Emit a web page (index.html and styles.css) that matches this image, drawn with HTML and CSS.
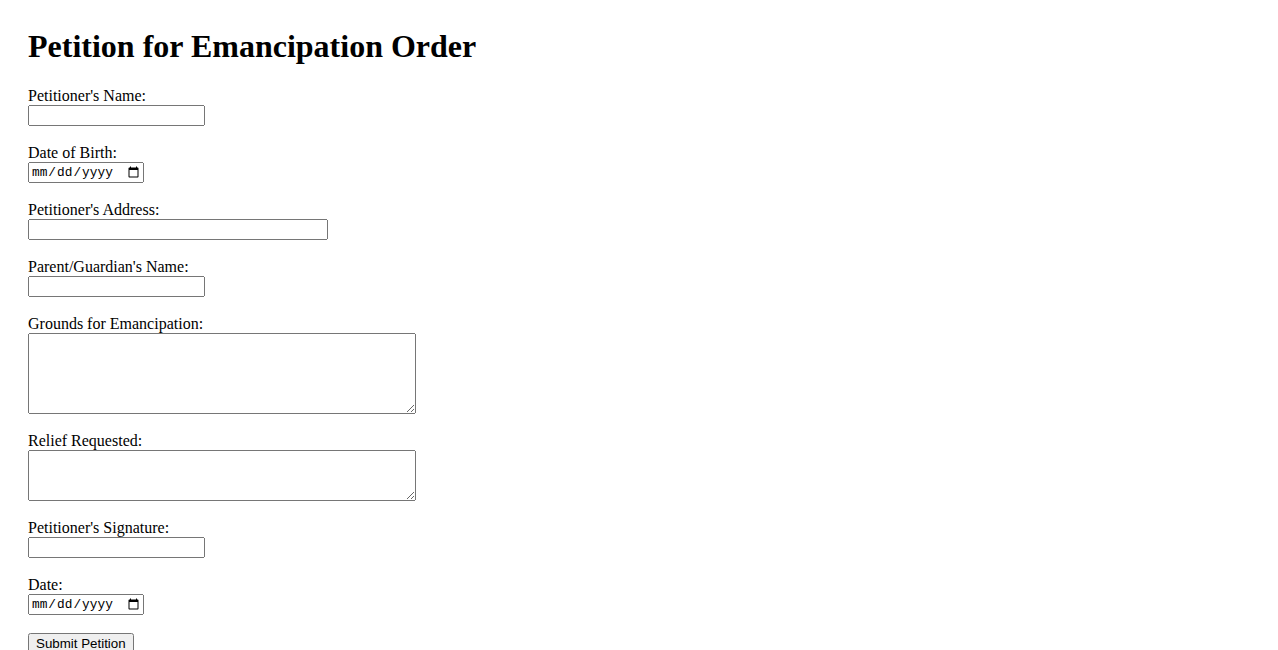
FILE: index.html
```html
<!DOCTYPE html>
<html lang="en">
<head>
<meta charset="utf-8">
<title>Petition for Emancipation Order</title>
<link rel="stylesheet" href="styles.css">
</head>
<body>
<h1 class="title">Petition for Emancipation Order</h1>
<form class="petition">
  <label for="name">Petitioner's Name:</label><br>
  <input type="text" id="name" class="field"><br><br>
  <label for="dob">Date of Birth:</label><br>
  <input type="date" id="dob" class="date"><br><br>
  <label for="address">Petitioner's Address:</label><br>
  <input type="text" id="address" class="field field-wide"><br><br>
  <label for="guardian">Parent/Guardian's Name:</label><br>
  <input type="text" id="guardian" class="field"><br><br>
  <label for="grounds">Grounds for Emancipation:</label><br>
  <textarea id="grounds" class="area area-tall"></textarea><br><br>
  <label for="relief">Relief Requested:</label><br>
  <textarea id="relief" class="area area-short"></textarea><br><br>
  <label for="signature">Petitioner's Signature:</label><br>
  <input type="text" id="signature" class="field"><br><br>
  <label for="date">Date:</label><br>
  <input type="date" id="date" class="date"><br><br>
  <button type="submit" class="submit">Submit Petition</button>
</form>
</body>
</html>
```
FILE: styles.css
```css
body {
  margin: 0;
  padding: 28px;
  font-family: "Liberation Serif", "Times New Roman", serif;
  font-size: 16px;
  color: #000;
  background: #fff;
}
.title {
  margin: 0 0 22px;
  font-size: 32px;
  font-weight: bold;
}
.field, .submit {
  font-family: "Liberation Sans", Arial, sans-serif;
  font-size: 13.333px;
}
.field {
  width: 177px;
  box-sizing: border-box;
}
.field-wide {
  width: 300px;
}
.date {
  width: 116px;
  box-sizing: border-box;
  font-family: "Liberation Mono", monospace;
  font-size: 12.8px;
}
.area {
  width: 388px;
  box-sizing: border-box;
  vertical-align: top;
  font-family: "Liberation Mono", monospace;
  font-size: 13.333px;
}
.area-tall { height: 81px; }
.area-short { height: 51px; }
```
